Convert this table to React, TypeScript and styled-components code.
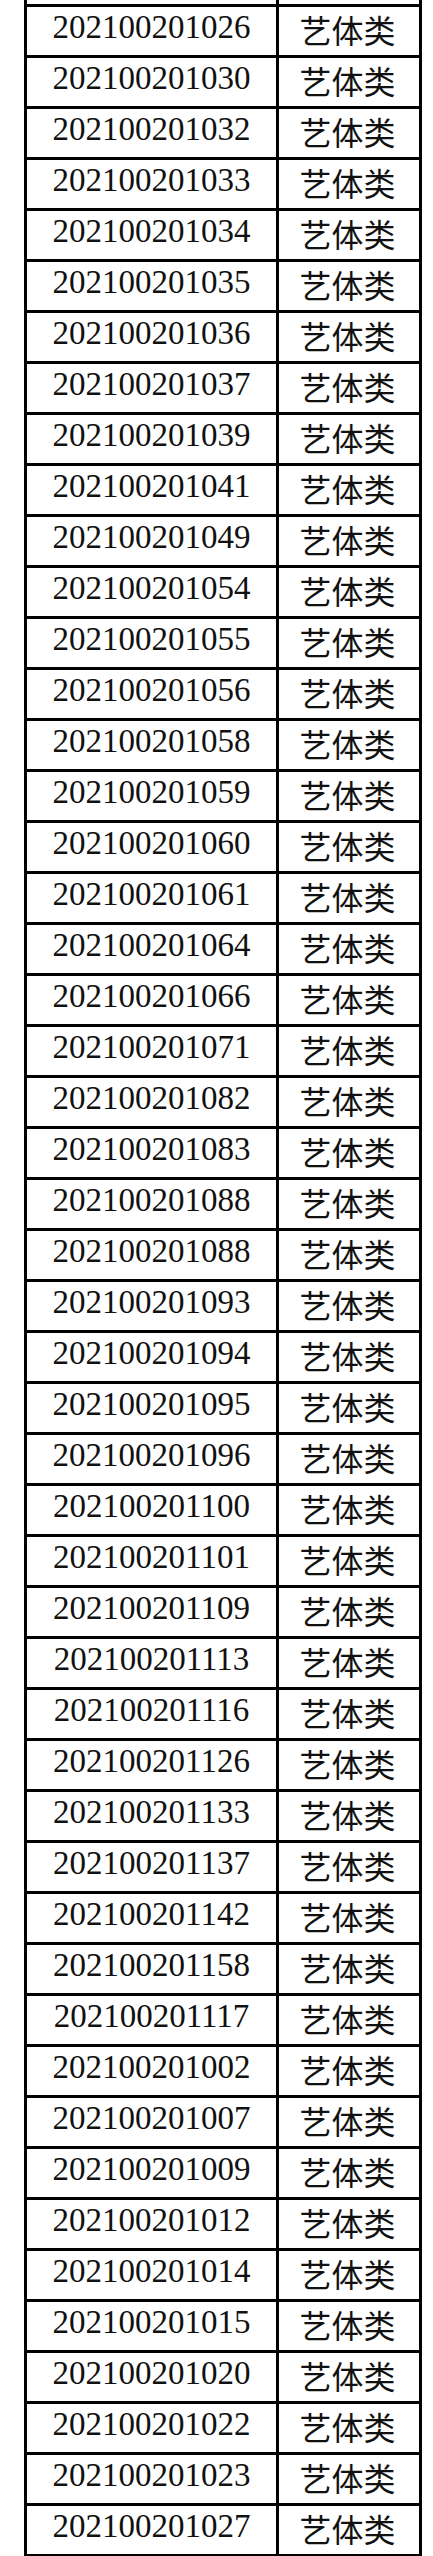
import * as React from 'react';
import styled, { createGlobalStyle } from 'styled-components';

const ids: string[] = [
  '1026', '1030', '1032', '1033', '1034', '1035', '1036', '1037', '1039', '1041',
  '1049', '1054', '1055', '1056', '1058', '1059', '1060', '1061', '1064', '1066',
  '1071', '1082', '1083', '1088', '1088', '1093', '1094', '1095', '1096', '1100',
  '1101', '1109', '1113', '1116', '1126', '1133', '1137', '1142', '1158', '1117',
  '1002', '1007', '1009', '1012', '1014', '1015', '1020', '1022', '1023', '1027',
];

const GlobalStyle = createGlobalStyle`
  html, body {
    margin: 0;
    padding: 0;
    background: #ffffff;
  }
`;

const Page = styled.main`
  width: 433px;
  height: 2556px;
  overflow: hidden;
  padding-left: 24px;
  box-sizing: border-box;
  background: #ffffff;
`;

const Sheet = styled.div`
  width: 398px;
  box-sizing: border-box;
  border-left: 3px solid #000;
  border-right: 3px solid #000;
  border-bottom: 3px solid #000;
`;

// the first row is cut off by the top of the picture, only its bottom 4px show
const Row = styled.div<{ $clip?: boolean }>`
  display: grid;
  grid-template-columns: 249px 140px;
  height: ${(p) => (p.$clip ? '4px' : '48px')};
  border-top: ${(p) => (p.$clip ? 'none' : '3px solid #000')};
  overflow: hidden;
`;

const NumCell = styled.div`
  display: flex;
  align-items: center;
  justify-content: center;
  padding-bottom: 7px;
  box-sizing: border-box;
  font-family: "Liberation Serif", "Times New Roman", serif;
  font-size: 33px;
  line-height: 1;
  color: #111;
`;

const TypeCell = styled.div`
  display: flex;
  align-items: center;
  justify-content: center;
  padding-bottom: 4px;
  box-sizing: border-box;
  border-left: 3px solid #000;
  font-family: "Noto Sans CJK SC", "Noto Sans", sans-serif;
  font-size: 32px;
  line-height: 1;
  color: #111;
`;

const App: React.FC = () => {
  return (
    <>
      <GlobalStyle />
      <Page>
        <Sheet>
          <Row $clip>
            <NumCell />
            <TypeCell />
          </Row>
          {ids.map((id, i) => (
            <Row key={i}>
              <NumCell>{`20210020${id}`}</NumCell>
              <TypeCell>艺体类</TypeCell>
            </Row>
          ))}
        </Sheet>
      </Page>
    </>
  );
};

export default App;
